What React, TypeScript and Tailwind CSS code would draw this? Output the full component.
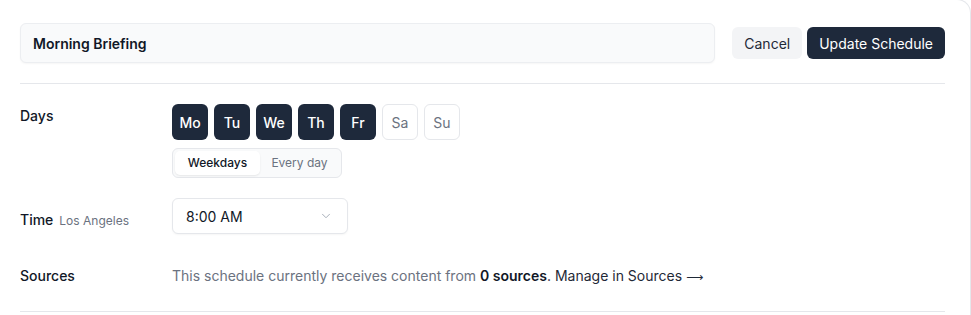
import { ChevronDown } from 'lucide-react';

const DAYS = [
  { label: 'Mo', on: true },
  { label: 'Tu', on: true },
  { label: 'We', on: true },
  { label: 'Th', on: true },
  { label: 'Fr', on: true },
  { label: 'Sa', on: false },
  { label: 'Su', on: false },
];

const App = () => {
  return (
    <div className="w-[971px] h-[315px] overflow-hidden bg-white font-['Inter',sans-serif] text-[#111827]">
      <div className="w-[971px] h-[340px] border-r border-t border-[#e5e7eb] rounded-tr-[14px] -mt-[1px] pl-5 pr-[25px]">
        {/* Header */}
        <div className="flex items-center gap-[17px] pt-[23px] pb-[20px] border-b border-[#e5e7eb]">
          <div className="flex-1 h-10 flex items-center px-[12px] rounded-md border border-[#eceef1] bg-[#f9fafb] shadow-[0_1px_2px_rgba(0,0,0,0.04)]">
            <span className="text-[14px] font-semibold">Morning Briefing</span>
          </div>
          <div className="flex items-center gap-[5px]">
            <button className="h-8 px-[12px] rounded-md bg-[#f3f4f6] text-[14px] text-[#1f2937]">Cancel</button>
            <button className="h-8 px-[12px] rounded-md bg-[#1e293b] text-[14px] text-white">Update Schedule</button>
          </div>
        </div>

        {/* Days */}
        <div className="flex pt-5">
          <div className="w-[152px] pt-[1px] text-[14px] font-medium">Days</div>
          <div className="flex flex-col gap-2">
            <div className="flex gap-[6px]">
              {DAYS.map((d) => (
                <div
                  key={d.label}
                  className={
                    d.on
                      ? 'w-9 h-9 rounded-md bg-[#1e293b] text-white flex items-center justify-center text-[14px] font-medium'
                      : 'w-9 h-9 rounded-md border border-[#e5e7eb] bg-white text-[#6b7280] flex items-center justify-center text-[14px]'
                  }
                >
                  {d.label}
                </div>
              ))}
            </div>
            <div className="flex w-[170px] h-[30px] p-[2px] rounded-md border border-[#e5e7eb] bg-[#f9fafb]">
              <div className="w-[85px] rounded-[5px] bg-white shadow-[0_1px_2px_rgba(0,0,0,0.08)] flex items-center justify-center text-[12px] font-medium text-[#111827]">
                Weekdays
              </div>
              <div className="flex-1 flex items-center justify-center text-[12px] text-[#6b7280]">Every day</div>
            </div>
          </div>
        </div>

        {/* Time */}
        <div className="flex items-center pt-5">
          <div className="w-[152px] pt-[7px] flex items-baseline gap-[6px]">
            <span className="text-[14px] font-medium">Time</span>
            <span className="text-[12px] text-[#6b7280]">Los Angeles</span>
          </div>
          <div className="w-[176px] h-9 flex items-center justify-between pl-[13px] pr-[14px] rounded-md border border-[#e5e7eb] bg-white shadow-[0_1px_2px_rgba(0,0,0,0.04)]">
            <span className="text-[14px]">8:00 AM</span>
            <ChevronDown size={14} strokeWidth={1.5} className="text-[#9ca3af]" />
          </div>
        </div>

        {/* Sources */}
        <div className="flex items-center pt-[31px] pb-[25px] border-b border-[#e5e7eb]">
          <div className="w-[152px] text-[14px] font-medium">Sources</div>
          <p className="text-[14px] text-[#6b7280]">
            This schedule currently receives content from{' '}
            <span className="font-semibold text-[#111827]">0 sources</span>
            <span className="text-[#1f2937]">
              . Manage in Sources <span className="font-['DejaVu_Sans',sans-serif] text-[12px]">⟶</span>
            </span>
          </p>
        </div>
      </div>
    </div>
  );
};

export default App;
